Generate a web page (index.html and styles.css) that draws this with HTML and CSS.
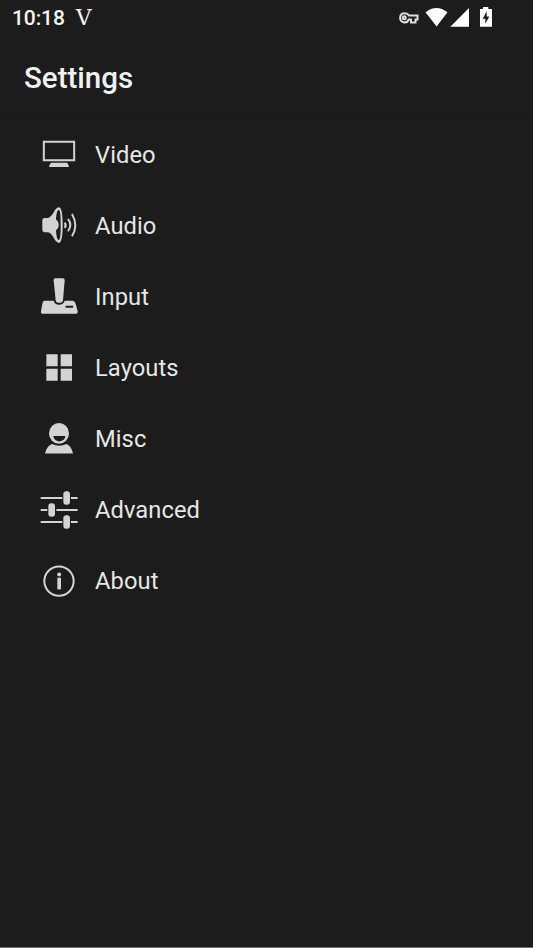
FILE: index.html
```html
<!DOCTYPE html>
<html lang="en">
<head>
<meta charset="utf-8">
<title>Settings</title>
<link rel="stylesheet" href="styles.css">
</head>
<body>
<div class="screen">
  <div class="status">
    <span class="time">10:18</span><span class="vpn">V</span>
    <svg class="indicators" viewBox="0 0 143 38" width="143" height="38">
      <path class="key" fill-rule="evenodd" d="M14.5 13.3a4.5 4.5 0 1 0 4.3 6.2H21v3h4.5v-3h2v-4H19a4.9 4.9 0 0 0-4.5-2.2z"/>
      <circle class="key" cx="14.3" cy="17.8" r="1.5"/>
      <path d="M35.5 12.3Q46.5 3.8 57.5 12.3L46.6 26.4z"/>
      <path d="M79 8V26.7H60.3z"/>
      <path d="M93 7h5.3v2H102v17.7H90V9h3z"/>
      <path class="bolt" d="M96.7 11.3L92.7 18.7h2.6v5L99.3 16.5h-2.6z"/>
    </svg>
  </div>
  <header class="title"><h1>Settings</h1></header>
  <ul class="list">
    <li><svg viewBox="27 12 120 120"><path class="line" stroke-width="6" d="M41.5 35.5h91v55h-91z"/><path d="M63 98h48q5 5 6 13H57q1-8 6-13z"/></svg><span>Video</span></li>
    <li><svg viewBox="27 21.3 120 120"><path d="M43 60h12q8-3 14-13Q77 29 87 28q11 2 11 53t-11 54q-10-2-18-19-6-10-14-13H43q-6-1-6-7V67q0-6 6-7z"/><path class="hole" d="M86 36c-5 0-7 14-8 29 5 4 8 9 8 16s-3 12-8 16c1 15 3 29 8 29s6-18 6-45-1-45-6-45z"/><path class="line" stroke-width="6" d="M104 74q6 8 0 16M114 63q14 18 0 37"/><path class="line" stroke-width="6" d="M126 48q20 34 0 67"/></svg><span>Audio</span></li>
    <li><svg viewBox="27 24.6 120 120"><path d="M75 31h24q5 0 5 6l-5 60q-1 8-11 8t-11-8l-6-60q0-6 4-6z"/><path fill-rule="evenodd" d="M43 99h28q3 12 16 12t17-12h24q6 0 9 9l6 22q1 8-7 8H40q-8 0-7-8l4-22q2-9 6-9zm66 15q-3 0-3 3t3 3h18q3 0 3-3t-3-3z"/></svg><span>Input</span></li>
    <li><svg viewBox="27 26.5 120 120"><path d="M49 48h34v36H49zM92 48h34v36H92zM49 92h34v36H49zM92 92h34v36H92z"/></svg><span>Layouts</span></li>
    <li><svg viewBox="27 23.8 120 120"><ellipse cx="87" cy="70" rx="30" ry="31"/><path class="hole" d="M70 78h36q-1 15-18 16-17-1-18-16z"/><path d="M66 102q22 10 43 0 15 6 20 28H45q6-23 21-28z"/></svg><span>Misc</span></li>
    <li><svg viewBox="27 28.5 120 120"><path class="line" stroke-width="6" d="M32 52.5h65M123 52.5h20M32 88.5h20M79 88.5h64M32 124.5h65M123 124.5h20"/><rect x="100" y="32" width="20" height="41" rx="9"/><rect x="55" y="68" width="20" height="41" rx="9"/><rect x="100" y="104" width="20" height="41" rx="9"/></svg><span>Advanced</span></li>
    <li><svg viewBox="27 25.8 120 120"><circle class="line" stroke-width="6" cx="87" cy="86" r="44"/><circle cx="87.5" cy="66" r="6"/><path d="M82 76h11v35H82z"/></svg><span>About</span></li>
  </ul>
</div>
</body>
</html>
```
FILE: styles.css
```css
* { box-sizing: border-box; }
body { margin: 0; background: #1c1c1c; color: #e6e6e6; font-family: Roboto, sans-serif; }
.screen { height: 948px; border-bottom: 1px solid #707070; overflow: hidden; }
.status { display: flex; height: 38px; padding-left: 12px; color: #f5f5f5; }
.time { width: 64px; font-size: 21px; font-weight: 500; line-height: 37px; letter-spacing: -0.1px; }
.vpn { font-family: "DejaVu Serif", serif; font-size: 21.5px; line-height: 35px; }
.indicators { margin-left: auto; fill: #fff; }
.indicators .key { fill: none; stroke: #ddd; stroke-width: 2; }
.indicators .bolt { fill: #1c1c1c; }
.title { height: 80.5px; padding-left: 24px; border-bottom: 1px solid #181818; }
h1 { margin: 0; color: #f1f1f4; font-size: 29.5px; font-weight: 500; line-height: 81px; }
.list { margin: 0; padding: 0 0 0 39px; list-style: none; }
.list li { display: flex; align-items: center; gap: 16px; height: 71.1px; font-size: 23.7px; letter-spacing: 0.08px; }
.list span { padding-top: 1.3px; }
.list svg { width: 40px; height: 40px; fill: #d3d3d3; }
.list .line { fill: none; stroke: #d3d3d3; }
.list .hole { fill: #1c1c1c; }
```
